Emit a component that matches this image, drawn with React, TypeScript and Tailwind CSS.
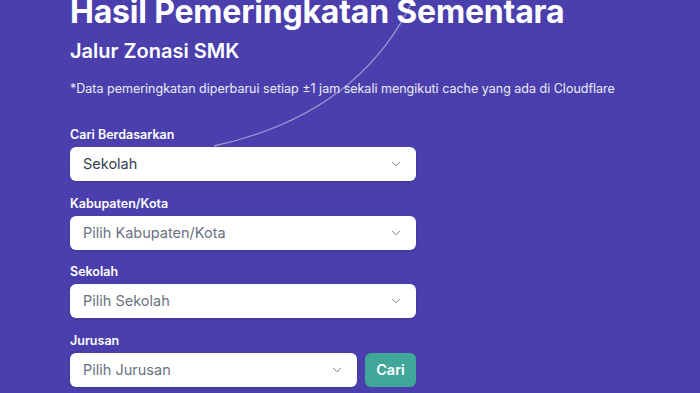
import { ChevronDown } from "lucide-react";

function SelectBox({ text, placeholder, className = "" }: { text: string; placeholder?: boolean; className?: string }) {
  return (
    <div className={`flex h-[34px] items-center justify-between rounded-md bg-white pl-[13px] pr-[13px] shadow-sm ${className}`}>
      <span className={`text-[14.5px] ${placeholder ? "text-gray-500" : "text-gray-700"}`}>{text}</span>
      <ChevronDown className="h-[14px] w-[14px] text-gray-500" strokeWidth={1.6} />
    </div>
  );
}

function Field({ label, children }: { label: string; children: React.ReactNode }) {
  return (
    <div className="flex flex-col">
      <label className="mb-[4px] text-[12.5px] leading-4 font-semibold text-white">{label}</label>
      {children}
    </div>
  );
}

export default function App() {
  return (
    <main
      className="relative h-[393px] w-[700px] overflow-hidden bg-[#4a3fad]"
      style={{ fontFamily: "Inter, 'Noto Sans', sans-serif" }}
    >
      <svg className="pointer-events-none absolute inset-0" width="700" height="393">
        <path d="M 414 -2 Q 360 114 214 146" fill="none" stroke="rgba(255,255,255,0.45)" strokeWidth="1.3" />
      </svg>

      <div className="relative flex flex-col pl-[70px]">
        <h1 className="mt-[-4px] text-[32px] leading-8 font-bold tracking-[-0.2px] text-white">
          Hasil Pemeringkatan Sementara
        </h1>
        <h2 className="mt-[11px] text-[20px] leading-6 font-semibold text-white">Jalur Zonasi SMK</h2>
        <p className="mt-[18px] text-[12.5px] leading-4 text-white/90">
          *Data pemeringkatan diperbarui setiap ±1 jam sekali mengikuti cache yang ada di Cloudflare
        </p>

        <div className="mt-[30px] flex w-[346px] flex-col gap-[14.5px]">
          <Field label="Cari Berdasarkan">
            <SelectBox text="Sekolah" />
          </Field>
          <Field label="Kabupaten/Kota">
            <SelectBox text="Pilih Kabupaten/Kota" placeholder />
          </Field>
          <Field label="Sekolah">
            <SelectBox text="Pilih Sekolah" placeholder />
          </Field>
          <Field label="Jurusan">
            <div className="flex gap-[8px]">
              <SelectBox text="Pilih Jurusan" placeholder className="flex-1" />
              <button
                type="button"
                className="h-[34px] w-[51px] rounded-md bg-[#3fa69a] text-[14.5px] font-semibold text-white"
              >
                Cari
              </button>
            </div>
          </Field>
        </div>
      </div>
    </main>
  );
}
